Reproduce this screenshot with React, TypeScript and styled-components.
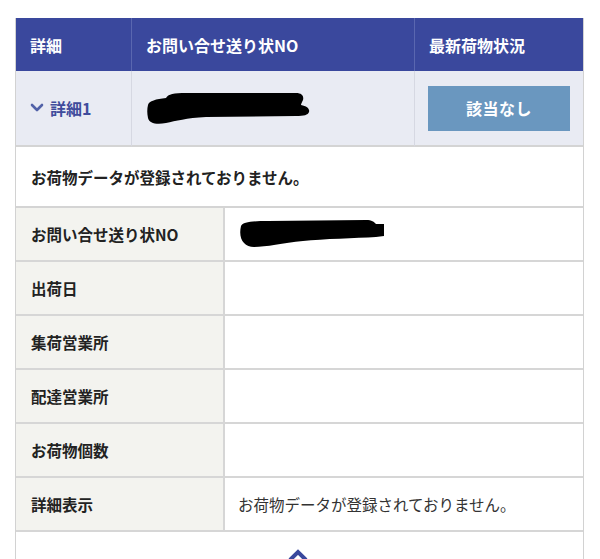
import React from "react";
import styled, { createGlobalStyle } from "styled-components";

const Global = createGlobalStyle`
  html, body { margin: 0; padding: 0; background: #ffffff; }
  body { font-family: "Noto Sans CJK JP", "Noto Sans", sans-serif; color: #222; }
`;

const Page = styled.div`
  padding: 18px 16px 0 15px;
  height: 559px;
  box-sizing: border-box;
  overflow: hidden;
`;

const Table = styled.div`
  display: flex;
  flex-direction: column;
  border-left: 1px solid #d2d2d2;
  border-right: 1px solid #d2d2d2;
`;

const SummaryGrid = styled.div`
  display: grid;
  grid-template-columns: 115px 283px 1fr;
`;

const HeadCell = styled.div<{ $pad?: number; $first?: boolean }>`
  background: #3a489d;
  color: #ffffff;
  font-weight: 700;
  font-size: 16px;
  height: 53px;
  display: flex;
  align-items: center;
  padding-left: ${(p) => p.$pad ?? 14}px;
  border-left: ${(p) => (p.$first ? "none" : "1px solid #5a67b0")};
  box-sizing: border-box;
`;

const BodyCell = styled.div<{ $first?: boolean; $center?: boolean }>`
  background: #e9ebf3;
  height: 76px;
  display: flex;
  align-items: center;
  justify-content: ${(p) => (p.$center ? "center" : "flex-start")};
  padding: 0 ${(p) => (p.$center ? "13px" : "0")} 0 ${(p) => (p.$center ? "13px" : "14px")};
  border-left: ${(p) => (p.$first ? "none" : "1px solid #d6d8e2")};
  border-bottom: 2px solid #d4d4d4;
  box-sizing: border-box;
`;

const DetailToggle = styled.div`
  display: flex;
  align-items: center;
  gap: 6px;
  color: #3f4c9c;
  font-weight: 700;
  font-size: 16px;
`;

const StatusButton = styled.div`
  flex: 1;
  height: 45px;
  background: #6a97bf;
  color: #ffffff;
  font-weight: 700;
  font-size: 16px;
  display: flex;
  align-items: center;
  justify-content: center;
  letter-spacing: 0.5px;
`;

const Message = styled.div`
  height: 61px;
  display: flex;
  align-items: center;
  padding-left: 15px;
  font-weight: 700;
  font-size: 15.5px;
  color: #222;
  border-bottom: 2px solid #d4d4d4;
  box-sizing: border-box;
`;

const DetailGrid = styled.div`
  display: grid;
  grid-template-columns: 209px 1fr;
`;

const Label = styled.div`
  background: #f3f3ef;
  height: 54px;
  display: flex;
  align-items: center;
  padding-left: 15px;
  font-weight: 700;
  font-size: 15.5px;
  color: #222;
  border-bottom: 2px solid #d6d6d6;
  border-right: 2px solid #d6d6d6;
  box-sizing: border-box;
`;

const Value = styled.div`
  background: #ffffff;
  height: 54px;
  display: flex;
  align-items: center;
  padding-left: 13px;
  font-size: 15.5px;
  color: #333;
  border-bottom: 2px solid #d6d6d6;
  box-sizing: border-box;
`;

const Footer = styled.div`
  height: 40px;
  display: flex;
  justify-content: center;
  padding-top: 16px;
  padding-right: 4px;
  box-sizing: border-box;
`;

const Redact1 = () => (
  <svg width="166" height="34" viewBox="0 0 166 34">
    <path
      d="M2 14 C3 10 10 8 20 7 C22 3 28 2 40 2 L150 2 C156 2 158 5 157 9 C156 11 155 13 155 14 C161 15 164 18 163 21 C162 24 158 25 150 25 L60 26 C40 27 30 30 20 32 C10 34 3 32 2 27 C1 22 1 18 2 14 Z"
      fill="#000"
    />
  </svg>
);

const Redact2 = () => (
  <svg width="150" height="30" viewBox="0 0 150 30">
    <path
      d="M3 7 C5 3 14 2 30 2 L128 1 C134 1 136 3 138 5 L146 5 L146 17 L138 18 C118 19 85 20 65 22 C45 24 28 28 16 28 C6 28 0 20 3 7 Z"
      fill="#000"
    />
  </svg>
);

const ChevronDown = () => (
  <svg width="14" height="10" viewBox="0 0 14 10">
    <path d="M2 2 L7 7 L12 2" stroke="#5262a8" strokeWidth="2.6" fill="none" strokeLinecap="round" strokeLinejoin="round" />
  </svg>
);

const ChevronUp = () => (
  <svg width="22" height="14" viewBox="0 0 22 14">
    <path d="M3 12 L11 4 L19 12" stroke="#3a489d" strokeWidth="4" fill="none" strokeLinejoin="miter" />
  </svg>
);

const rows: { label: string; value: React.ReactNode }[] = [
  { label: "お問い合せ送り状NO", value: <Redact2 /> },
  { label: "出荷日", value: "" },
  { label: "集荷営業所", value: "" },
  { label: "配達営業所", value: "" },
  { label: "お荷物個数", value: "" },
  { label: "詳細表示", value: "お荷物データが登録されておりません。" },
];

export default function App() {
  return (
    <>
      <Global />
      <Page>
        <Table>
          <SummaryGrid>
            <HeadCell $first>詳細</HeadCell>
            <HeadCell>お問い合せ送り状NO</HeadCell>
            <HeadCell>最新荷物状況</HeadCell>
            <BodyCell $first>
              <DetailToggle>
                <ChevronDown />
                詳細1
              </DetailToggle>
            </BodyCell>
            <BodyCell>
              <Redact1 />
            </BodyCell>
            <BodyCell $center>
              <StatusButton>該当なし</StatusButton>
            </BodyCell>
          </SummaryGrid>
          <Message>お荷物データが登録されておりません。</Message>
          <DetailGrid>
            {rows.map((r) => (
              <React.Fragment key={r.label}>
                <Label>{r.label}</Label>
                <Value>{r.value}</Value>
              </React.Fragment>
            ))}
          </DetailGrid>
          <Footer>
            <ChevronUp />
          </Footer>
        </Table>
      </Page>
    </>
  );
}
